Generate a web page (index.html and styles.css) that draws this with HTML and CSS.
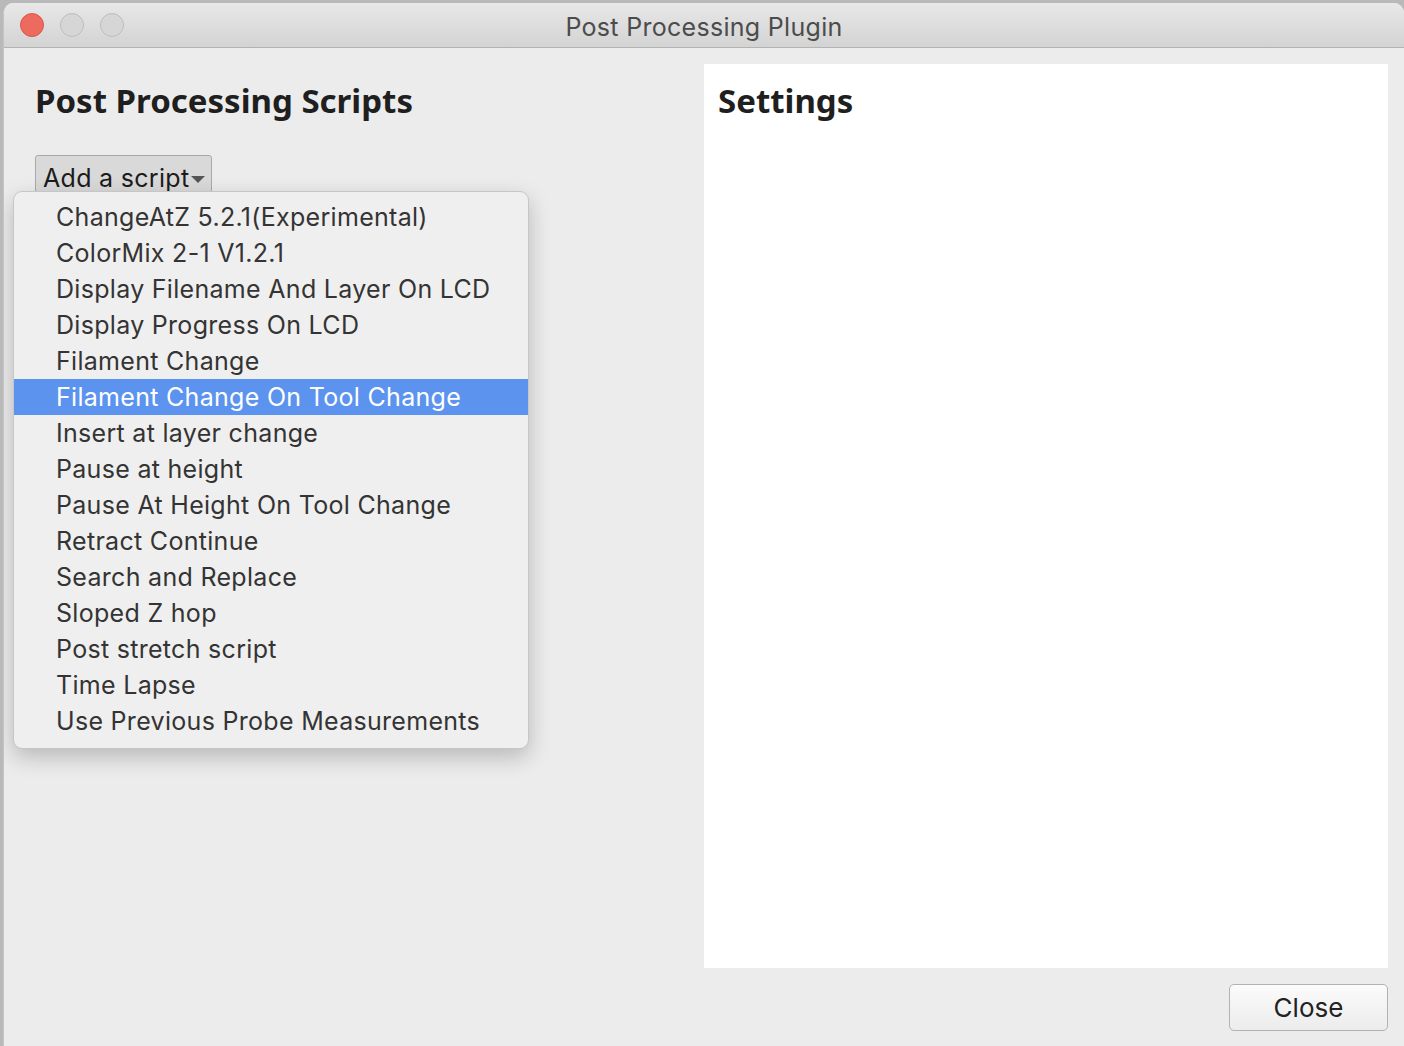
FILE: index.html
```html
<!DOCTYPE html>
<html>
<head>
<meta charset="utf-8">
<link rel="stylesheet" href="styles.css">
</head>
<body>
<div class="window">
  <div class="titlebar">
    <div class="lights">
      <span class="light red"></span>
      <span class="light"></span>
      <span class="light"></span>
    </div>
    <div class="title">Post Processing Plugin</div>
  </div>
  <div class="content">
    <div class="left">
      <h1 class="heading">Post Processing Scripts</h1>
      <div class="add-wrap">
        <div class="add-btn">Add a script<span class="caret"></span></div>
        <ul class="menu">
          <li>ChangeAtZ 5.2.1(Experimental)</li>
          <li>ColorMix 2-1 V1.2.1</li>
          <li>Display Filename And Layer On LCD</li>
          <li>Display Progress On LCD</li>
          <li>Filament Change</li>
          <li class="active">Filament Change On Tool Change</li>
          <li>Insert at layer change</li>
          <li>Pause at height</li>
          <li>Pause At Height On Tool Change</li>
          <li>Retract Continue</li>
          <li>Search and Replace</li>
          <li>Sloped Z hop</li>
          <li>Post stretch script</li>
          <li>Time Lapse</li>
          <li>Use Previous Probe Measurements</li>
        </ul>
      </div>
    </div>
    <div class="panel">
      <h1 class="heading settings">Settings</h1>
    </div>
  </div>
  <div class="footer">
    <div class="close-btn">Close</div>
  </div>
</div>
</body>
</html>
```
FILE: styles.css
```css
html, body {
  margin: 0;
  padding: 0;
}
body {
  background: #b9b9b9;
  width: 1404px;
  height: 1046px;
  overflow: hidden;
  font-family: "Inter", "Liberation Sans", sans-serif;
}
.window {
  margin: 3px 0 0 3px;
  width: 1401px;
  height: 1043px;
  background: #ececec;
  border-radius: 10px 10px 0 0;
  display: flex;
  flex-direction: column;
  overflow: hidden;
  box-sizing: border-box;
  border-left: 1px solid #c4c4c4;
}
.titlebar {
  height: 44px;
  flex: none;
  background: linear-gradient(#e8e8e8, #d3d3d3);
  border-bottom: 1px solid #b3b3b3;
  display: flex;
  align-items: center;
  position: relative;
}
.lights {
  display: flex;
  gap: 16px;
  padding-left: 16px;
}
.light {
  width: 22px;
  height: 22px;
  border-radius: 50%;
  background: #d6d6d6;
  border: 1px solid #bcbcbc;
}
.light.red {
  background: #ee6a5f;
  border-color: #d9574d;
}
.title {
  position: absolute;
  left: 0;
  right: 0;
  top: 9px;
  text-align: center;
  font-size: 25px;
  letter-spacing: 0.3px;
  color: #4c4c4c;
  pointer-events: none;
}
.content {
  flex: 1;
  display: flex;
  padding: 16px 16px 0 0;
  min-height: 0;
}
.left {
  width: 700px;
  flex: none;
}
.heading {
  margin: 0;
  font-family: "Noto Sans", "Open Sans", sans-serif;
  font-weight: 700;
  font-size: 33px;
  color: #1f1f1f;
  line-height: 44px;
  padding: 15px 0 0 31px;
}
.settings {
  padding-left: 14px;
}
.panel {
  flex: 1;
  background: #ffffff;
}
.add-wrap {
  position: relative;
  margin: 32px 0 0 31px;
}
.add-btn {
  display: inline-flex;
  align-items: center;
  height: 38px;
  padding: 8px 6px 0 7px;
  box-sizing: border-box;
  background: #d9d9d9;
  border: 1px solid #a9a9a9;
  border-radius: 3px;
  font-size: 25px;
  letter-spacing: 0.3px;
  color: #1c1c1c;
}
.caret {
  display: inline-block;
  width: 0;
  height: 0;
  border-left: 7px solid transparent;
  border-right: 7px solid transparent;
  border-top: 7px solid #555;
  margin-left: 2px;
  margin-top: 3px;
}
.menu {
  position: absolute;
  left: -22px;
  top: 36px;
  width: 516px;
  margin: 0;
  padding: 7px 0 9px;
  list-style: none;
  background: #efefef;
  border: 1px solid #c6c6c6;
  border-radius: 9px;
  box-shadow: 0 8px 22px rgba(0,0,0,0.22);
  box-sizing: border-box;
}
.menu li {
  height: 36px;
  line-height: 36px;
  padding-left: 42px;
  font-size: 25px;
  letter-spacing: 0.3px;
  color: #343434;
  white-space: nowrap;
}
.menu li.active {
  background: #5b93ee;
  color: #ffffff;
}
.footer {
  height: 78px;
  flex: none;
  display: flex;
  justify-content: flex-end;
  align-items: flex-start;
  padding: 16px 16px 0 0;
  box-sizing: border-box;
}
.close-btn {
  width: 159px;
  height: 47px;
  box-sizing: border-box;
  border: 1px solid #b2b2b2;
  border-radius: 5px;
  background: linear-gradient(#fbfbfb, #ececec);
  display: flex;
  align-items: center;
  justify-content: center;
  font-size: 26px;
  color: #222;
}
```
